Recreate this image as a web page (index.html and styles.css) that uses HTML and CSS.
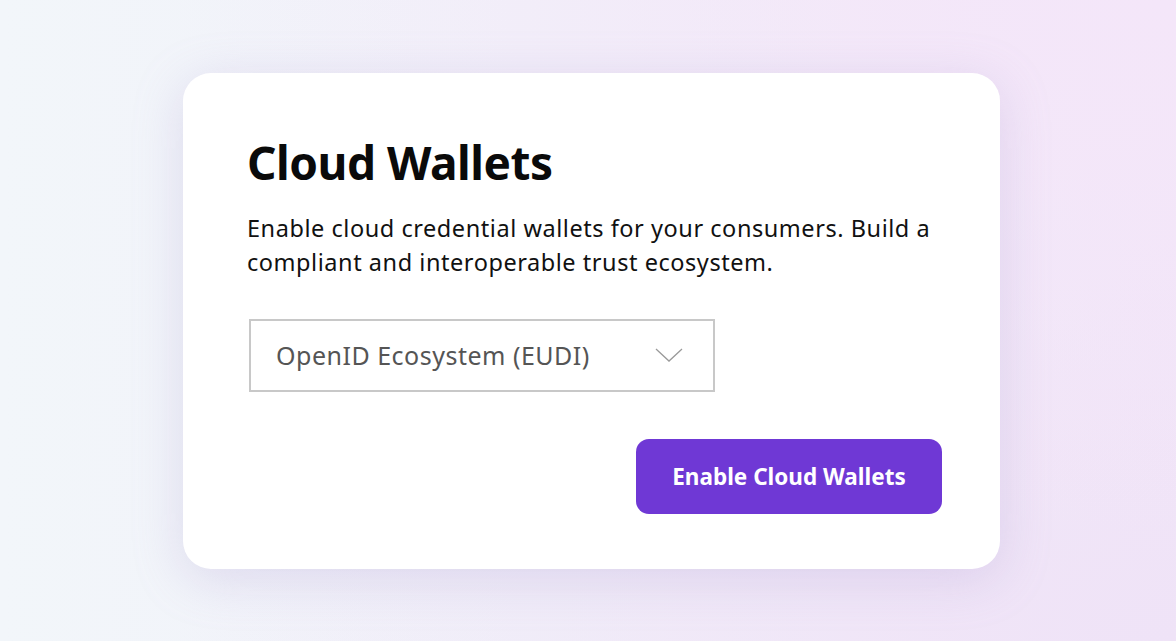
FILE: index.html
```html
<!DOCTYPE html>
<html lang="en">
<head>
<meta charset="utf-8">
<title>Cloud Wallets</title>
<link rel="stylesheet" href="styles.css">
</head>
<body>
<main class="page">
  <section class="card">
    <h1 class="title">Cloud Wallets</h1>
    <p class="desc">Enable cloud credential wallets for your consumers. Build a compliant and interoperable trust ecosystem.</p>
    <div class="select">
      <span class="select-label">OpenID Ecosystem (EUDI)</span>
      <svg class="chevron" width="28" height="14" viewBox="0 0 28 14" aria-hidden="true">
        <path d="M1 1 L14 13 L27 1" fill="none" stroke="#9a9a9a" stroke-width="1.3"/>
      </svg>
    </div>
    <div class="actions">
      <button class="btn">Enable Cloud Wallets</button>
    </div>
  </section>
</main>
</body>
</html>
```

FILE: styles.css
```css
* { box-sizing: border-box; }
html, body { margin: 0; padding: 0; height: 100%; }
body {
  font-family: "Noto Sans", "Open Sans", sans-serif;
  background:
    radial-gradient(ellipse at 100% 0%, #f4e6f9 0%, rgba(244,230,249,0) 60%),
    radial-gradient(ellipse at 100% 100%, #efe3f7 0%, rgba(239,227,247,0) 60%),
    linear-gradient(90deg, #f2f6fa 0%, #f1f1f9 45%, #f3e7f8 100%);
}
.page {
  height: 100%;
  display: flex;
  align-items: center;
  justify-content: center;
  padding-left: 7px;
}
.card {
  width: 817px;
  height: 496px;
  background: #fff;
  border-radius: 28px;
  box-shadow: 0 10px 50px rgba(170, 150, 210, 0.28);
  padding: 60px 58px 55px 64px;
  display: flex;
  flex-direction: column;
}
.title {
  margin: 0;
  font-size: 46px;
  font-weight: 700;
  line-height: 58px;
  color: #0a0a0a;
  letter-spacing: -0.5px;
}
.desc {
  margin: 20px 0 0;
  font-size: 23.5px;
  line-height: 34px;
  color: #111;
  letter-spacing: 0.55px;
  max-width: 720px;
}
.select {
  margin: 40px 0 0 2px;
  width: 466px;
  height: 73px;
  border: 2px solid #c8c8c8;
  display: flex;
  align-items: center;
  justify-content: space-between;
  padding: 0 30px 0 25px;
}
.select-label {
  font-size: 25px;
  color: #555;
  letter-spacing: 0.5px;
}
.chevron { display: block; }
.actions {
  margin-top: auto;
  display: flex;
  justify-content: flex-end;
}
.btn {
  width: 306px;
  height: 75px;
  border: none;
  border-radius: 13px;
  background: #6f38d5;
  color: #fff;
  font-family: inherit;
  font-size: 22.5px;
  font-weight: 700;
}
```
